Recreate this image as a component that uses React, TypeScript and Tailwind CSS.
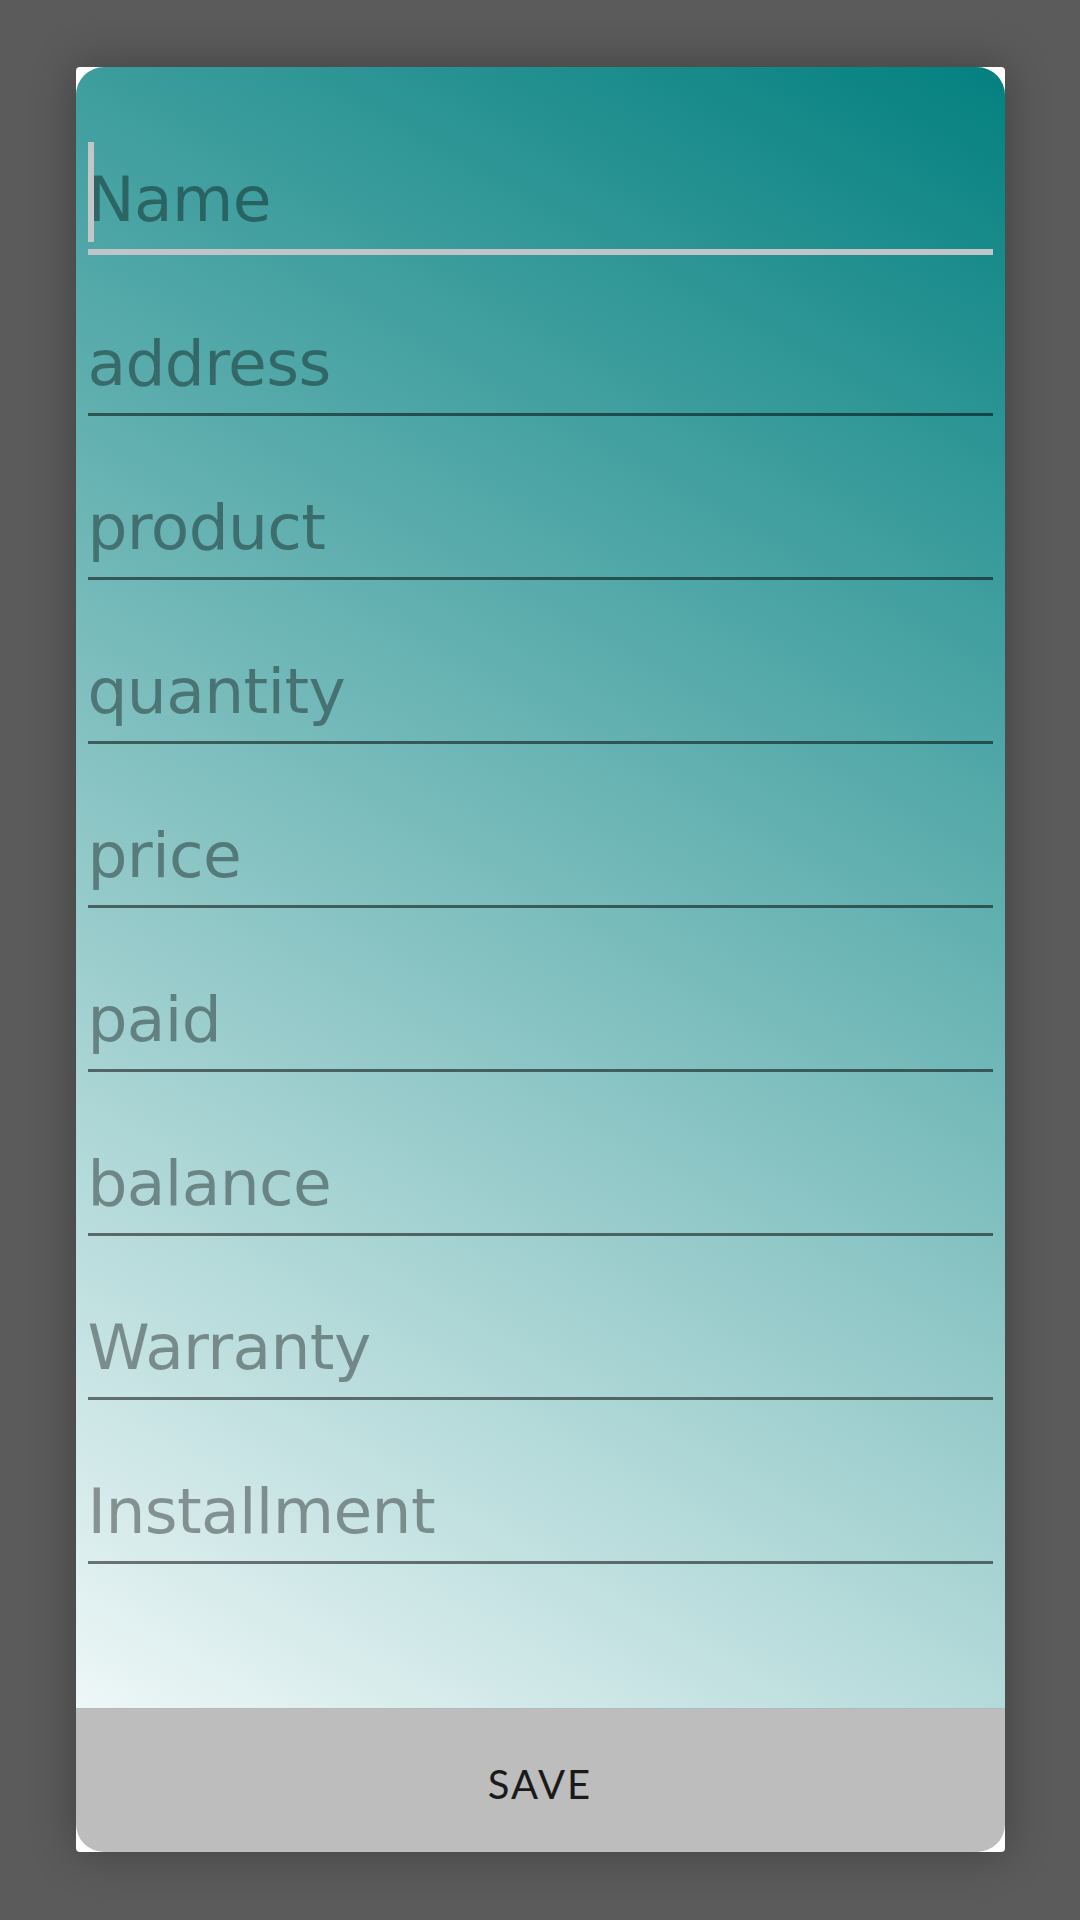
import React from "react";

const fields = [
  "Name",
  "address",
  "product",
  "quantity",
  "price",
  "paid",
  "balance",
  "Warranty",
  "Installment",
];

function Field({ label, focused }: { label: string; focused?: boolean }) {
  return (
    <div className="relative h-[164px] flex flex-col justify-end">
      {focused && (
        <div className="absolute left-0 top-[54px] w-[6px] h-[100px] bg-[#c3c7ca]" />
      )}
      <div className="pb-[12px] text-[63px] leading-[74px] text-black/[0.38] font-['DejaVu_Sans',sans-serif] tracking-[-0.01em]">
        {label}
      </div>
      {focused ? (
        <div className="h-[6px] -mb-[3px] bg-[#bfc5c8]" />
      ) : (
        <div className="h-[3px] bg-black/[0.52]" />
      )}
    </div>
  );
}

export default function App() {
  return (
    <div className="min-h-[1920px] w-full bg-[#5b5b5b] flex justify-center pt-[67px]">
      <div className="w-[929px] h-[1785px] bg-white rounded-[4px] shadow-[0_0_45px_rgba(0,0,0,0.3)] flex flex-col">
        <div className="h-[1641px] rounded-t-[28px] px-[12px] pt-[21px] bg-linear-[29.5deg] from-[#eef7f7] to-[#048080]">
          {fields.map((f, i) => (
            <Field key={f} label={f} focused={i === 0} />
          ))}
        </div>
        <button className="flex-1 rounded-b-[28px] bg-[#bdbdbd] border-t border-[#b3b8ba] flex items-center justify-center pt-[6px]">
          <span className="text-[40px] leading-none tracking-[0.05em] text-[#1a1a1a] font-['Lato',sans-serif]">
            SAVE
          </span>
        </button>
      </div>
    </div>
  );
}
